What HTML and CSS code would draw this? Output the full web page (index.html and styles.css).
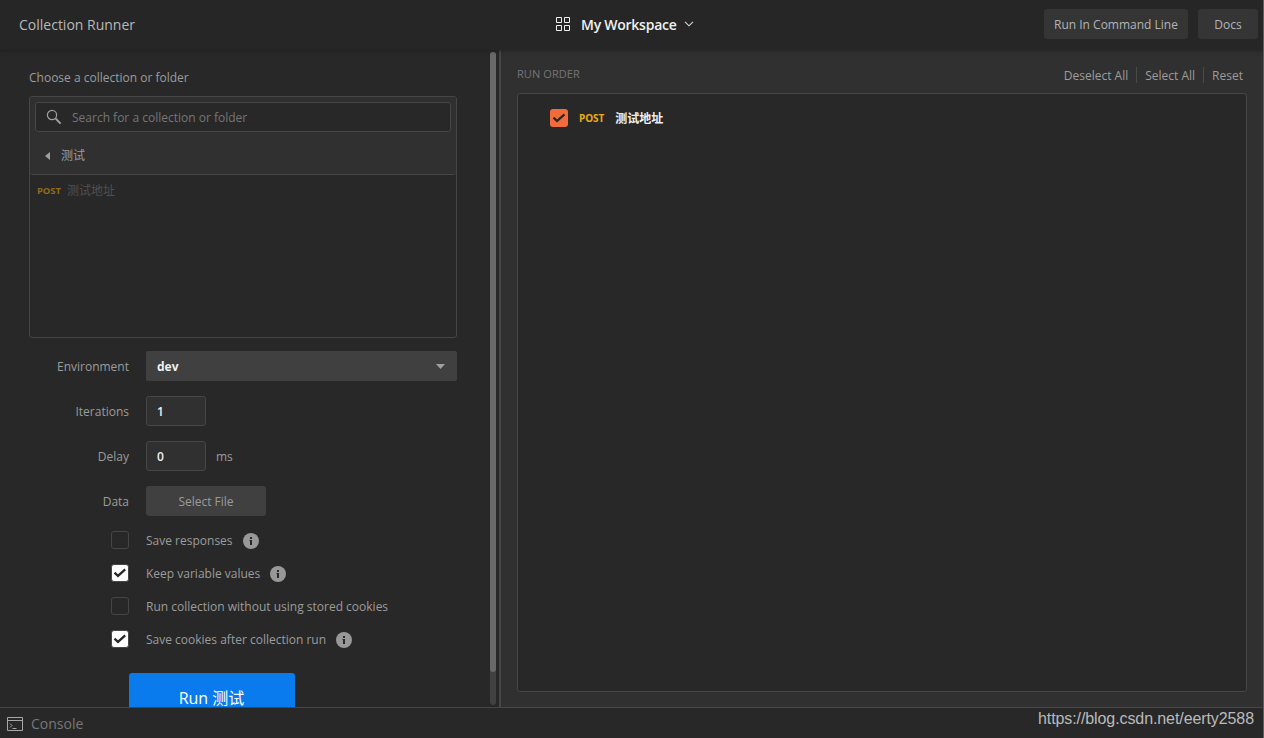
FILE: index.html
```html
<!DOCTYPE html>
<html lang="en">
<head>
<meta charset="utf-8">
<title>Collection Runner</title>
<link rel="stylesheet" href="styles.css">
</head>
<body>
<div class="app">
  <header class="header">
    <div class="title">Collection Runner</div>
    <div class="workspace">
      <svg width="16" height="16" viewBox="0 0 16 16" fill="none" stroke="#f0f0f0"><path d="M1.500 .5h5v5h-5zM9.500 .5h5v5h-5zM1.500 8.500h5v5h-5zM9.500 8.500h5v5h-5z"/></svg>
      <span class="workspace-name">My Workspace</span>
      <svg class="chevron" width="10" height="6" viewBox="0 0 10 6" fill="none" stroke="#d8d8d8" stroke-width="1.100"><path d="M1 .8l4 4 4-4"/></svg>
    </div>
    <div class="header-actions">
      <button class="header-button wide">Run In Command Line</button>
      <button class="header-button">Docs</button>
    </div>
  </header>
  <main class="main">
    <section class="config">
      <div class="config-body">
        <div class="choose">Choose a collection or folder</div>
        <div class="picker">
          <div class="picker-head">
            <div class="search">
              <svg width="16" height="16" viewBox="0 0 16 16" fill="none" stroke="#a0a0a0"><circle cx="6" cy="6" r="4.600" stroke-width="1.200"/><path d="M9.400 9.400l5.200 5.200" stroke-width="2"/></svg>
              <span>Search for a collection or folder</span>
            </div>
            <div class="crumb"><svg width="5" height="8" viewBox="0 0 5 8"><path d="M5 0v8L0 4z" fill="#a0a0a0"/></svg><span>测试</span></div>
          </div>
          <div class="picker-row"><span class="method">POST</span><span>测试地址</span></div>
        </div>
        <div class="field"><label>Environment</label><div class="select"><span>dev</span><svg width="9" height="5" viewBox="0 0 9 5"><path d="M0 0h9L4.500 5z" fill="#a0a0a0"/></svg></div></div>
        <div class="field"><label>Iterations</label><div class="number">1</div></div>
        <div class="field"><label>Delay</label><div class="number">0</div><span class="unit">ms</span></div>
        <div class="field"><label>Data</label><button class="file">Select File</button></div>
        <div class="options">
          <div class="option"><i class="box"></i><span>Save responses</span><svg class="info" width="16" height="16" viewBox="0 0 16 16"><circle cx="8" cy="8" r="8" fill="#989898"/><path d="M7 4h2v2H7zM6.500 7H9v5H7V8h-.5z" fill="#282828"/></svg></div>
          <div class="option"><i class="box on"><svg width="16" height="16" viewBox="0 0 16 16" fill="none" stroke="#282828" stroke-width="2.300"><path d="M2.500 7.700l3.500 3.200 7.200-6.600"/></svg></i><span>Keep variable values</span><svg class="info" width="16" height="16" viewBox="0 0 16 16"><circle cx="8" cy="8" r="8" fill="#989898"/><path d="M7 4h2v2H7zM6.500 7H9v5H7V8h-.5z" fill="#282828"/></svg></div>
          <div class="option"><i class="box"></i><span>Run collection without using stored cookies</span></div>
          <div class="option"><i class="box on"><svg width="16" height="16" viewBox="0 0 16 16" fill="none" stroke="#282828" stroke-width="2.300"><path d="M2.500 7.700l3.500 3.200 7.200-6.600"/></svg></i><span>Save cookies after collection run</span><svg class="info" width="16" height="16" viewBox="0 0 16 16"><circle cx="8" cy="8" r="8" fill="#989898"/><path d="M7 4h2v2H7zM6.500 7H9v5H7V8h-.5z" fill="#282828"/></svg></div>
        </div>
        <button class="run">Run 测试</button>
      </div>
      <div class="track"><div class="thumb"></div></div>
    </section>
    <section class="order">
      <div class="order-head">
        <h2>RUN ORDER</h2>
        <nav class="links"><a>Deselect All</a><a>Select All</a><a>Reset</a></nav>
      </div>
      <div class="order-list">
        <div class="request"><i class="tick"><svg width="18" height="18" viewBox="0 0 18 18" fill="none" stroke="#282828" stroke-width="2.300"><path d="M3.500 8.700l3.500 3.300 7.500-6.700"/></svg></i><span class="method">POST</span><span class="request-name">测试地址</span></div>
      </div>
    </section>
  </main>
  <footer class="footer">
    <div class="console"><svg width="16" height="14" viewBox="0 0 16 14" fill="none" stroke="#a8a8a8"><path d="M.5.5h15v13H.5zM.5 3.500h15M3 6.500l2 2-2 2M5.500 11.500h4"/></svg><span>Console</span></div>
    <span class="watermark">https://blog.csdn.net/eerty2588</span>
  </footer>
</div>
</body>
</html>
```

FILE: styles.css
```css
* { box-sizing: border-box; }
body {
  margin: 0;
  font: 12px/18px "Open Sans", "Noto Sans CJK SC", sans-serif;
  color: #9c9c9c;
  background: #282828;
}
button { font: inherit; color: inherit; border: 0; padding: 2px 0 0; border-radius: 3px; }
svg { display: block; flex: none; }
.app { width: 1264px; height: 738px; display: flex; flex-direction: column; overflow: hidden; border-right: 1px solid #606060; }
.header {
  height: 50px; flex: none; z-index: 1;
  display: grid; grid-template-columns: 555px 1fr auto; align-items: center;
  padding-right: 5px; background: #262626; box-shadow: 0 0 4px #1b1b1b;
}
.title { padding-left: 19px; font-size: 14px; color: #b8b8b8; }
.workspace { display: flex; align-items: center; }
.workspace-name { margin: 0 7px 0 10px; font-size: 14px; font-weight: 600; letter-spacing: -.25px; color: #f0f0f0; }
.chevron { margin-top: -2px; }
.header-actions { display: flex; gap: 10px; margin-top: -2px; }
.header-button { width: 60px; height: 30px; background: #353535; color: #b4b4b4; }
.wide { width: 144px; }
.main { flex: 1; min-height: 0; display: flex; }
.config { width: 499px; flex: none; display: flex; overflow: hidden; }
.config-body { width: 490px; padding: 19px 33px 0 29px; }
.choose { height: 27px; }
.picker { height: 242px; border: 1px solid #464646; border-radius: 3px; overflow: hidden; }
.picker-head { height: 78px; padding: 5px; background: #303030; border-bottom: 1px solid #464646; border-radius: 0 0 3px 3px; }
.search { height: 30px; display: flex; align-items: center; gap: 10px; padding-left: 10px; background: #282828; border: 1px solid #464646; border-radius: 3px; color: #757575; }
.search span { padding-top: 2px; }
.crumb { display: flex; align-items: center; gap: 11px; height: 48px; padding-left: 10px; }
.picker-row { display: flex; align-items: center; gap: 6px; height: 32px; padding-left: 7px; color: #505050; }
.method { font-size: 9.500px; font-weight: 700; letter-spacing: -.1px; color: #8f6c19; }
.field { height: 30px; margin-bottom: 15px; display: flex; align-items: center; }
.picker + .field { margin-top: 13px; }
.field label { width: 100px; margin-right: 17px; padding-top: 2px; text-align: right; }
.select { width: 311px; height: 30px; display: flex; align-items: center; justify-content: space-between; padding: 0 12px 0 11px; background: #404040; border-radius: 2px; color: #f0f0f0; font-weight: 700; }
.select span { padding-top: 2px; }
.number { width: 60px; height: 30px; line-height: 30px; padding-left: 10px; background: #303030; border: 1px solid #464646; border-radius: 3px; color: #f0f0f0; font-weight: 600; }
.unit { margin-left: 10px; padding-top: 2px; }
.file { width: 120px; height: 30px; background: #404040; }
.options { display: grid; gap: 15px; padding-left: 82px; }
.option { height: 18px; display: flex; align-items: center; }
.option span { padding-top: 2px; }
.box { width: 18px; height: 18px; margin-right: 17px; border: 1px solid #464646; border-radius: 3px; }
.on { background: #fff; }
.info { margin: 2px 0 0 10px; }
.run { display: block; width: 166px; height: 50px; margin: 25px 0 0 100px; padding: 0 1px 0 0; background: #097bed; color: #fff; font-size: 16px; }
.track { width: 6px; height: 653px; margin-top: 2px; background: #414141; border-radius: 3px; }
.thumb { height: 620px; background: #696969; border-radius: 3px; }
.order { flex: 1; display: flex; flex-direction: column; padding: 0 16px 15px; background: #303030; border-left: 2px solid #464646; }
.order-head { height: 43px; display: flex; justify-content: space-between; }
.order-head h2 { margin: 15px 0 0; font-size: 11px; font-weight: 400; letter-spacing: .08px; color: #757575; }
.links { display: flex; margin: 17px 4px 0 0; height: 16px; }
.links a { line-height: 17px; padding: 0 8px; border-right: 1px solid #4a4a4a; }
.links a:last-child { padding-right: 0; border: 0; }
.order-list { flex: 1; background: #282828; border: 1px solid #464646; border-radius: 3px; }
.request { display: flex; align-items: center; height: 48px; padding-left: 32px; }
.tick { background: #f26b3a; border-radius: 3px; }
.request .method { font-size: 10px; color: #eaac1a; margin: 0 11px 0 11px; }
.request-name { padding-top: 1px; color: #f0f0f0; font-weight: 600; }
.footer { height: 31px; flex: none; display: flex; justify-content: space-between; border-top: 1px solid #464646; }
.console { display: flex; align-items: center; gap: 8px; padding: 2px 0 0 7px; font-size: 14px; color: #777; }
.watermark { margin-right: 9px; font: 16px/22px "Liberation Sans", sans-serif; letter-spacing: -.09px; color: #bababa; }
```
